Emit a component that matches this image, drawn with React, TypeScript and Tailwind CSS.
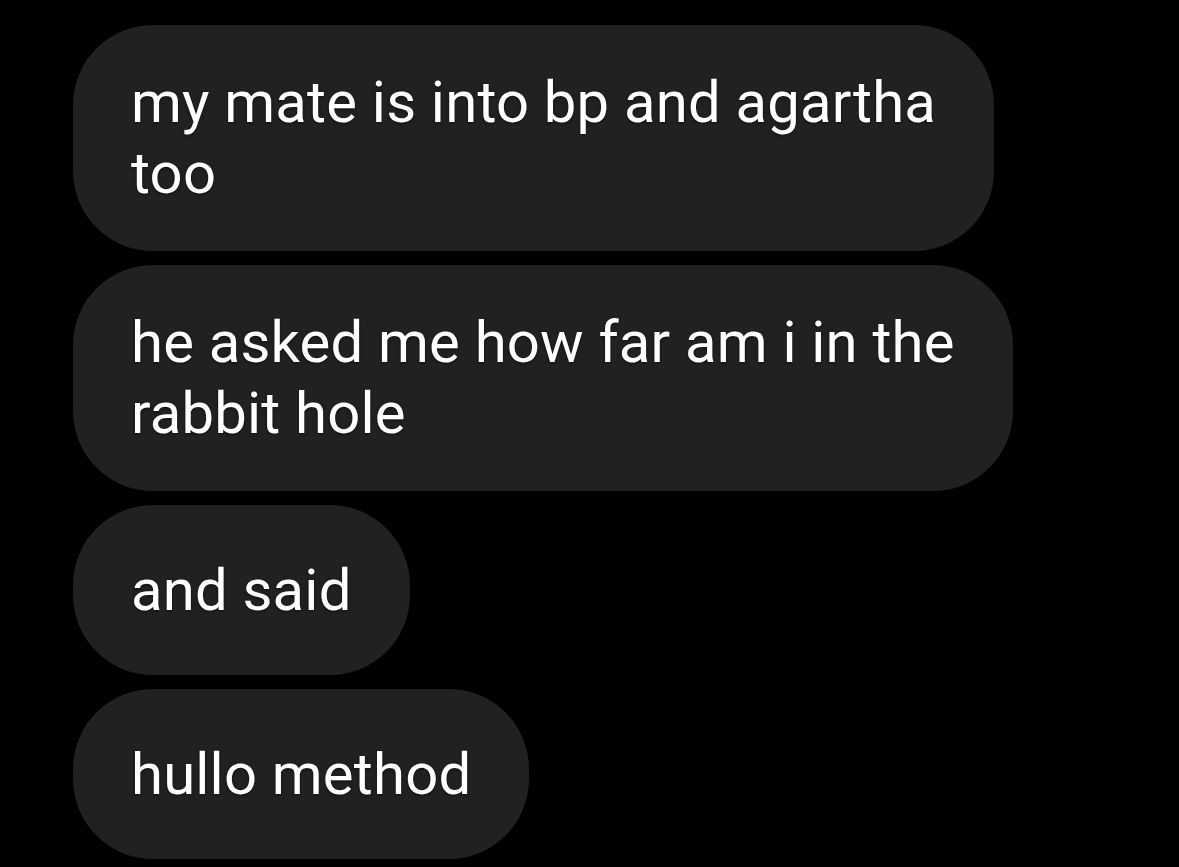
import React from 'react';

// each message keeps its own line breaks, the bubble hugs the longest line
const messages: string[][] = [
  ['my mate is into bp and agartha', 'too'],
  ['he asked me how far am i in the', 'rabbit hole'],
  ['and said'],
  ['hullo method'],
];

function Bubble({ lines }: { lines: string[] }) {
  return (
    <div className="w-fit rounded-[80px] bg-[#212121] px-[58px] py-[42px] min-h-[170px] flex items-center">
      <p className="whitespace-nowrap text-[58px] leading-[71px] tracking-[0.2px] text-white [text-shadow:0_1px_3px_rgba(0,0,0,0.6)]">
        {lines.map((l, i) => (
          <React.Fragment key={i}>
            {i > 0 && <br />}
            {l}
          </React.Fragment>
        ))}
      </p>
    </div>
  );
}

export default function App() {
  return (
    <div className="min-h-screen bg-black pl-[73px] pt-[25px] font-['Roboto',sans-serif]">
      <div className="flex flex-col gap-[14px]">
        {messages.map((m, i) => (
          <Bubble key={i} lines={m} />
        ))}
      </div>
    </div>
  );
}
